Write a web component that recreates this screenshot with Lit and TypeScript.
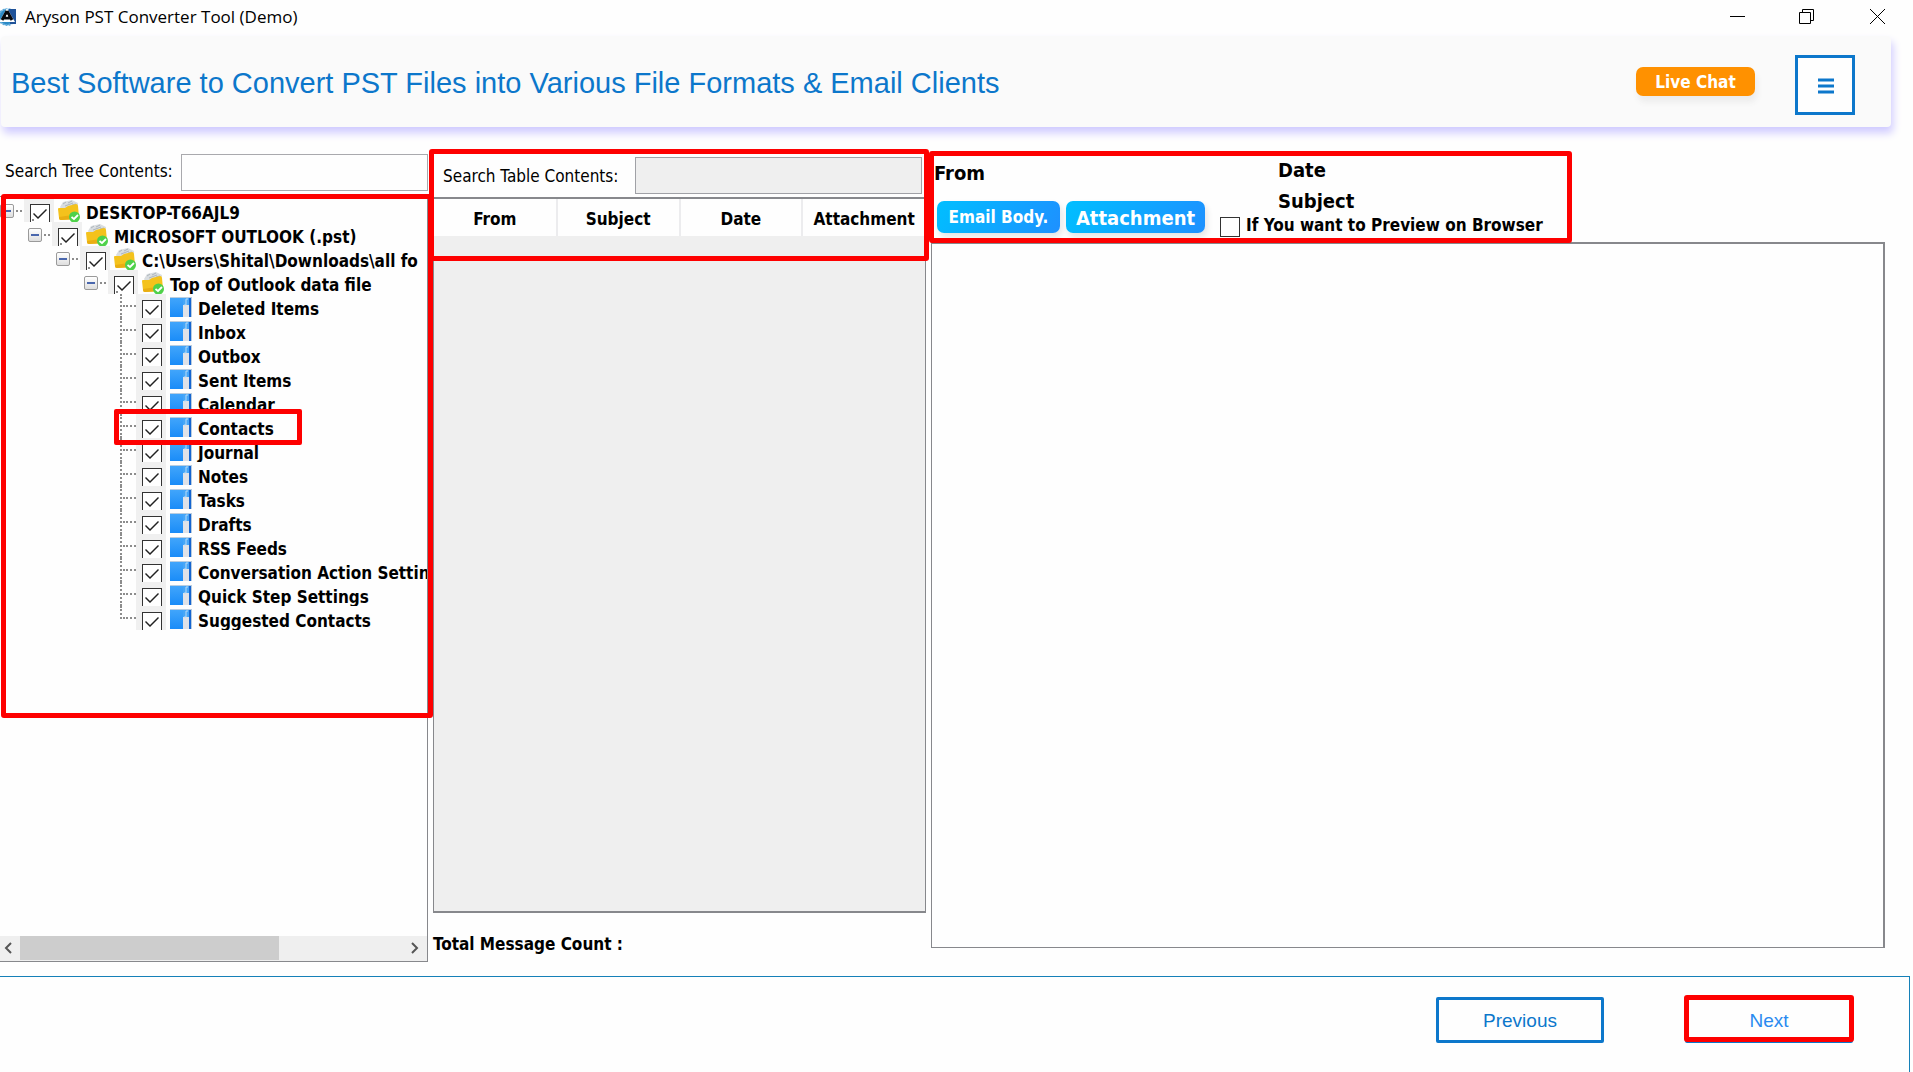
import { LitElement, html, css, svg, nothing } from "lit";
import { customElement, state } from "lit/decorators.js";
import { classMap } from "lit/directives/class-map.js";
import { styleMap } from "lit/directives/style-map.js";

interface TreeNode {
  label: string;
  level: number;
  marked?: boolean;
}

const LEAVES = [
  "Deleted Items",
  "Inbox",
  "Outbox",
  "Sent Items",
  "Calendar",
  "Contacts",
  "Journal",
  "Notes",
  "Tasks",
  "Drafts",
  "RSS Feeds",
  "Conversation Action Settings",
  "Quick Step Settings",
  "Suggested Contacts",
];

const LEAF_LEVEL = 4;
const INDENT = 28;

const NODES: TreeNode[] = [
  { label: "DESKTOP-T66AJL9", level: 0 },
  { label: "MICROSOFT OUTLOOK (.pst)", level: 1 },
  { label: "C:\\Users\\Shital\\Downloads\\all fo", level: 2 },
  { label: "Top of Outlook data file", level: 3 },
  ...LEAVES.map((label) => ({ label, level: LEAF_LEVEL, marked: label === "Contacts" })),
];

const folderIcon = html`<svg class="icon" viewBox="0 0 22 22" width="22" height="22" aria-hidden="true">
  ${svg`
    <path d="M2 7 L5 2 L14 0 L20 3 L19 9 L4 11Z" fill="#d9dde0"/>
    <path d="M5 4 L8 2 M10 3 L14 1 M7 6 L15 3 M14 5 L18 4" stroke="#aeb6bc" stroke-width="1"/>
    <path d="M0 9 Q0 8 1 8 L7 8 L10 6 L18 4 Q20 4 20 6 L21 17 Q21 19 19 19 L3 20 Q1 20 1 18Z" fill="#f4c21c"/>
    <path d="M1 17 L21 14 L21 17 Q21 19 19 19 L3 20 Q1 20 1 18Z" fill="#e9ae12"/>
    <circle cx="16.500" cy="17" r="5.500" fill="#4fd14a"/>
    <path d="M13.500 17 L16 19 L20 15" fill="none" stroke="#fff" stroke-width="1.800"/>
  `}
</svg>`;

const bookIcon = html`<svg class="icon" viewBox="0 0 22 22" width="22" height="22" aria-hidden="true">
  ${svg`
    <defs><linearGradient id="cover" x1="0" y1="0" x2="0" y2="1">
      <stop offset="0" stop-color="#41a5fb"/><stop offset="1" stop-color="#1a8cf8"/>
    </linearGradient></defs>
    <rect x="0" y="1" width="22" height="20" fill="#b9cde0"/>
    <rect x="0" y="2" width="19" height="7" fill="#45a6f8"/>
    <rect x="0" y="2" width="13" height="19" fill="url(#cover)"/>
    <rect x="13" y="9" width="6" height="12" fill="#dfe2e8"/>
    <path d="M14 9 H16 V3 H18" fill="none" stroke="#b7daf8" stroke-width="1"/>
    <rect x="19" y="2" width="2" height="19" fill="#1565d0"/>
  `}
</svg>`;

@customElement("folder-tree")
export class FolderTree extends LitElement {
  @state() private unchecked = new Set<string>();

  static styles = css`
    :host {
      display: block;
    }
    .tree {
      list-style: none;
      margin: 0;
      padding: 1px 0 0;
    }
    .node {
      position: relative;
    }
    .row {
      display: flex;
      height: 24px;
      overflow: hidden;
      white-space: nowrap;
    }
    .toggle-cell {
      flex: none;
      display: flex;
      width: 24px;
      height: 24px;
      padding-top: 6px;
      box-sizing: border-box;
    }
    .toggle {
      flex: none;
      display: block;
      width: 14px;
      height: 14px;
      padding: 0;
      border: 1px solid #9a9a9a;
      border-radius: 2px;
      background: linear-gradient(#4a67ad, #4a67ad) center / 8px 2px no-repeat, linear-gradient(#fff, #dedede);
    }
    .dots {
      width: 6px;
      height: 4px;
      margin: 2px 0 0 2px;
      border-bottom: 2px dotted #8c8c8c;
    }
    .leaf-line {
      flex: none;
      box-sizing: border-box;
      width: 16px;
      height: 24px;
      margin-left: 8px;
      border-left: 2px dotted #8c8c8c;
    }
    .leaf-line::after {
      content: "";
      display: block;
      height: 11px;
      margin-left: 1px;
      border-bottom: 2px dotted #8c8c8c;
    }
    .leaf-line.last {
      height: 13px;
    }
    .check-cell {
      flex: none;
      position: relative;
      display: block;
      width: 30px;
      height: 24px;
      background: #f0f0f0;
    }
    .stem {
      position: absolute;
      left: 8px;
      bottom: 0;
      height: 3px;
      width: 4px;
      border-left: 2px dotted #8c8c8c;
      background: #fff;
    }
    .check {
      appearance: none;
      display: block;
      box-sizing: border-box;
      width: 20px;
      height: 20px;
      margin: 6px 0 0 6px;
      border: 1px solid #333;
      background: #fff;
    }
    .check:checked::after {
      content: "";
      display: block;
      width: 16px;
      height: 16px;
      margin: 1px;
      background: #222;
      clip-path: polygon(1px 8px, 2px 7px, 6px 11px, 14px 3px, 15px 4px, 6px 13px);
    }
    .icon {
      flex: none;
      display: block;
      margin: 2px 0 0 4px;
    }
    .name {
      font: bold 17px/24px "DejaVu Sans Condensed", "DejaVu Sans", sans-serif;
      padding: 3px 0 0 6px;
      color: #000;
    }
    .mark {
      position: absolute;
      left: 114px;
      top: -5px;
      box-sizing: border-box;
      width: 188px;
      height: 36px;
      border: 5px solid #fe0000;
      border-radius: 2px;
      z-index: 1;
      pointer-events: none;
    }
  `;

  private toggle(label: string) {
    const next = new Set(this.unchecked);
    if (next.has(label)) next.delete(label);
    else next.add(label);
    this.unchecked = next;
  }

  render() {
    return html`<ul class="tree">
      ${NODES.map((n, i) => {
        const leaf = n.level === LEAF_LEVEL;
        return html`<li class="node">
          <div class="row" style=${styleMap({ paddingLeft: `${n.level * INDENT}px` })}>
            ${leaf
              ? html`<span class=${classMap({ "leaf-line": true, last: i === NODES.length - 1 })}></span>`
              : html`<span class="toggle-cell"
                  ><button class="toggle" aria-label="Collapse ${n.label}"></button><span class="dots"></span
                ></span>`}
            <span class="check-cell"
              ><input
                class="check"
                type="checkbox"
                id="node-${i}"
                .checked=${!this.unchecked.has(n.label)}
                @change=${() => this.toggle(n.label)}
              />${leaf ? nothing : html`<span class="stem"></span>`}</span
            >
            ${leaf ? bookIcon : folderIcon}
            <label class="name" for="node-${i}">${n.label}</label>
          </div>
          ${n.marked ? html`<span class="mark"></span>` : nothing}
        </li>`;
      })}
    </ul>`;
  }
}

@customElement("app-root")
export class AppRoot extends LitElement {
  static styles = css`
    :host {
      display: flex;
      flex-direction: column;
      min-height: 100vh;
      background: #fefefe;
      color: #000;
      font: 17px/24px "DejaVu Sans Condensed", "DejaVu Sans", sans-serif;
    }
    * {
      box-sizing: border-box;
    }
    button {
      font: inherit;
      padding: 0;
      cursor: pointer;
    }
    .titlebar {
      display: flex;
      align-items: center;
      height: 36px;
      padding: 0 27px 2px 0;
      font: 17px/34px "Open Sans", "Noto Sans", sans-serif;
    }
    .logo {
      margin-right: 9px;
    }
    .app-name {
      flex: 1;
    }
    .window-buttons {
      display: flex;
      gap: 53px;
    }
    .window-button {
      display: block;
      width: 17px;
      height: 17px;
      border: 0;
      background: none;
    }
    .window-button svg {
      display: block;
    }
    .banner {
      display: flex;
      align-items: flex-start;
      height: 91px;
      margin: 0 22px 0 1px;
      padding: 0 36px 0 10px;
      border-radius: 4px;
      background: #fafafa;
      box-shadow: 2px 6px 8px #cfcaff;
    }
    .headline {
      flex: 1;
      margin: 0;
      font: 29px/32px "Liberation Sans", Arial, sans-serif;
      padding-top: 31px;
      color: #0c77cb;
    }
    .live-chat {
      width: 119px;
      height: 29px;
      margin: 31px 40px 0 0;
      border: 0;
      border-radius: 7px;
      background: #ff9100;
      color: #fff;
      font-weight: bold;
      box-shadow: 2px 6px 6px #ececec;
    }
    .menu {
      display: grid;
      place-items: center;
      width: 60px;
      height: 60px;
      margin-top: 19px;
      padding: 2px 0 0 1px;
      border: 3px solid #0c77cb;
      background: #fefefe;
    }
    .workspace {
      flex: 1;
      display: grid;
      grid-template-columns: 428fr 493fr 954fr;
      gap: 5px;
      padding: 22px 28px 14px 0;
    }
    .column {
      position: relative;
      display: flex;
      flex-direction: column;
      min-width: 0;
    }
    .search {
      display: flex;
      align-items: center;
      height: 37px;
    }
    .tree-column {
      padding-top: 5px;
    }
    .tree-column .search {
      padding-left: 5px;
      margin-bottom: 5px;
    }
    .tree-column .search-label {
      width: 176px;
      margin-top: -4px;
    }
    .table-column {
      padding-top: 8px;
    }
    .table-column .search {
      padding: 0 4px 0 10px;
      margin-bottom: 3px;
    }
    .table-column .search-label {
      width: 192px;
    }
    .search-input {
      flex: 1;
      min-width: 0;
      height: 37px;
      padding: 0 6px;
      border: 1px solid #a9a9ad;
      background: #fefefe;
      font: inherit;
    }
    .search-input:disabled {
      border-color: #a0a1a6;
      background: #efefef;
    }
    .tree-panel {
      flex: 1;
      display: flex;
      flex-direction: column;
      min-height: 0;
      border: solid #87888c;
      border-width: 1px 1px 1px 0;
      overflow: hidden;
    }
    .tree {
      flex: 1;
    }
    .scrollbar {
      display: flex;
      height: 25px;
      background: #efefef;
    }
    .scroll-button {
      display: grid;
      place-items: center;
      width: 20px;
      height: 24px;
      padding-right: 5px;
      border: 0;
      background: none;
    }
    .track {
      flex: 1;
    }
    .thumb {
      width: 67%;
      height: 24px;
      background: #cdcdcd;
    }
    .table-panel {
      flex: 1;
      border: solid #87888c;
      border-width: 2px 1px 2px 1px;
      background: #efefef;
    }
    .messages {
      width: 100%;
      table-layout: fixed;
      border-collapse: collapse;
    }
    .messages th {
      height: 37px;
      padding: 3px 0 0;
      border-right: 2px solid #ececee;
      background: #fefefe;
      font-weight: bold;
    }
    .messages th:last-child {
      border-right: 0;
    }
    .count {
      margin: 0;
      padding: 19px 0 6px;
      font-weight: bold;
    }
    .preview-head {
      display: flex;
      height: 93px;
      font-weight: bold;
    }
    .field {
      margin: 0;
      font-size: 20px;
      line-height: 24px;
    }
    .sender {
      width: 289px;
      padding: 12px 0 0 3px;
    }
    .tabs {
      display: flex;
      gap: 6px;
      padding: 16px 0 0 3px;
    }
    .tab {
      height: 32px;
      border: 0;
      border-radius: 7px;
      background: linear-gradient(120deg, #00bfff, #1e90ff);
      color: #fff;
      font-weight: bold;
      box-shadow: 2px 4px 6px #e4e4e4;
    }
    .tab-body {
      width: 123px;
    }
    .tab-attachment {
      width: 139px;
      padding-top: 2px;
      font-size: 20px;
    }
    .details {
      padding-top: 9px;
    }
    .details .field {
      padding-left: 58px;
      margin-bottom: 7px;
    }
    .details .field + .field {
      margin-bottom: 0;
    }
    .browser-option {
      display: flex;
      align-items: center;
      gap: 6px;
    }
    .browser-option input {
      appearance: none;
      width: 20px;
      height: 20px;
      margin: 3px 0 0;
      border: 1px solid #333;
      background: #fff;
    }
    .preview-panel {
      flex: 1;
      margin-bottom: 14px;
      border: solid #87888c;
      border-width: 2px 2px 1px 1px;
    }
    .mark {
      position: absolute;
      border: 5px solid #fe0000;
      border-radius: 3px;
      z-index: 2;
      pointer-events: none;
    }
    .mark-tree {
      left: 1px;
      right: -5px;
      top: 45px;
      height: 524px;
    }
    .mark-table {
      left: -4px;
      right: -3px;
      top: 0;
      height: 112px;
    }
    .mark-preview {
      left: -2px;
      top: 2px;
      width: 643px;
      height: 92px;
    }
    .footer {
      display: flex;
      justify-content: flex-end;
      gap: 81px;
      height: 96px;
      margin-right: 3px;
      padding: 20px 56px 0 0;
      border: solid #1580b8;
      border-width: 1px 1px 0 0;
    }
    .step {
      width: 168px;
      height: 46px;
      padding-top: 1px;
      border: 3px solid #0c77cb;
      border-radius: 2px;
      background: #fefefe;
      color: #0c77cb;
      font: 19px/24px "Liberation Sans", Arial, sans-serif;
    }
    .next {
      position: relative;
      color: #2a8af0;
    }
    .mark-next {
      inset: -5px -4px -2px;
    }
  `;

  render() {
    return html`
      <header class="titlebar">
        <svg class="logo" width="16" height="20" viewBox="0 0 16 20" aria-hidden="true">
          <circle cx="7" cy="10" r="8" fill="#2c8ac6" stroke="#5aa9da" stroke-width="2" stroke-dasharray="2 1" />
          <path d="M9 2 H16 V17 H10Z" fill="#1f5298" />
          <path d="M7 1 L15 15 H-1Z" fill="#fff" />
          <path d="M7 4 L12 13 M7 4 L2 13 M4 11 H11" fill="none" stroke="#05080d" stroke-width="3" />
          <path d="M7 8 V10" stroke="#fff" stroke-width="1" />
        </svg>
        <span class="app-name">Aryson PST Converter Tool (Demo)</span>
        <div class="window-buttons">
          <button class="window-button" aria-label="Minimize">
            <svg width="17" height="17" viewBox="0 0 17 17"><path d="M1 7.500H16" stroke="#000" /></svg>
          </button>
          <button class="window-button" aria-label="Restore">
            <svg width="17" height="17" viewBox="0 0 17 17" fill="none" stroke="#000">
              <path d="M.500 3.500H11.500V14.500H.500ZM3.500 3.500V.500H14.500V11.500H11.500" />
            </svg>
          </button>
          <button class="window-button" aria-label="Close">
            <svg width="17" height="17" viewBox="0 0 17 17"><path d="M1 0L16 15M16 0L1 15" stroke="#000" /></svg>
          </button>
        </div>
      </header>

      <div class="banner">
        <h1 class="headline">Best Software to Convert PST Files into Various File Formats &amp; Email Clients</h1>
        <button class="live-chat">Live Chat</button>
        <button class="menu" aria-label="Menu">
          <svg width="16" height="16" viewBox="0 0 16 16">
            <path d="M0 2H16M0 8H16M0 14H16" stroke="#0c77cb" stroke-width="3" />
          </svg>
        </button>
      </div>

      <main class="workspace">
        <section class="column tree-column">
          <div class="search">
            <label class="search-label" for="tree-search">Search Tree Contents:</label>
            <input class="search-input" id="tree-search" type="text" />
          </div>
          <div class="tree-panel">
            <folder-tree class="tree"></folder-tree>
            <div class="scrollbar">
              <button class="scroll-button" aria-label="Scroll left">
                <svg width="10" height="12" viewBox="0 0 10 12">
                  <path d="M8 1L3 6L8 11" fill="none" stroke="#555" stroke-width="2" />
                </svg>
              </button>
              <div class="track"><div class="thumb"></div></div>
              <button class="scroll-button" aria-label="Scroll right">
                <svg width="10" height="12" viewBox="0 0 10 12">
                  <path d="M2 1L7 6L2 11" fill="none" stroke="#555" stroke-width="2" />
                </svg>
              </button>
            </div>
          </div>
          <span class="mark mark-tree"></span>
        </section>

        <section class="column table-column">
          <div class="search">
            <label class="search-label" for="table-search">Search Table Contents:</label>
            <input class="search-input" id="table-search" type="text" disabled />
          </div>
          <div class="table-panel">
            <table class="messages">
              <thead>
                <tr>
                  <th scope="col">From</th>
                  <th scope="col">Subject</th>
                  <th scope="col">Date</th>
                  <th scope="col">Attachment</th>
                </tr>
              </thead>
            </table>
          </div>
          <p class="count">Total Message Count :</p>
          <span class="mark mark-table"></span>
        </section>

        <section class="column">
          <div class="preview-head">
            <div class="sender">
              <p class="field">From</p>
              <div class="tabs">
                <button class="tab tab-body">Email Body.</button>
                <button class="tab tab-attachment">Attachment</button>
              </div>
            </div>
            <div class="details">
              <p class="field">Date</p>
              <p class="field">Subject</p>
              <label class="browser-option"><input type="checkbox" />If You want to Preview on Browser</label>
            </div>
          </div>
          <div class="preview-panel"></div>
          <span class="mark mark-preview"></span>
        </section>
      </main>

      <footer class="footer">
        <button class="step">Previous</button>
        <button class="step next">Next<span class="mark mark-next"></span></button>
      </footer>
    `;
  }
}
